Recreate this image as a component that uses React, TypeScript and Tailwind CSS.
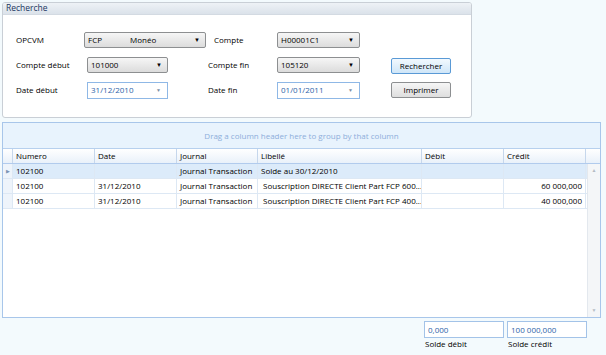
import React from "react";

const font = { fontFamily: '"Open Sans", "Noto Sans", sans-serif' };

function Combo({ children, className = "" }: { children: React.ReactNode; className?: string }) {
  return (
    <div
      className={
        "h-[16px] flex items-center justify-between rounded-[2px] border border-[#8d8f91] bg-gradient-to-b from-[#f6f6f6] to-[#dcdcdc] pl-[3px] pr-[5px] text-[8px] text-black " +
        className
      }
    >
      {children}
      <span className="text-[6px] leading-none">▼</span>
    </div>
  );
}

function DateBox({ value, className = "" }: { value: string; className?: string }) {
  return (
    <div
      className={
        "h-[17px] flex items-center justify-between border border-[#8fb8e6] bg-white pl-[3px] pr-[6px] text-[8px] text-[#2d5fa8] " +
        className
      }
    >
      <span>{value}</span>
      <span className="text-[5px] leading-none text-[#7b8ea5]">▼</span>
    </div>
  );
}

function Btn({ label, focused = false }: { label: string; focused?: boolean }) {
  return (
    <div
      className={
        "h-[16px] w-[60px] flex items-center justify-center rounded-[2px] text-[8px] text-black " +
        (focused
          ? "border border-[#5a9ad6] bg-gradient-to-b from-[#f2f9fe] to-[#cfe6f8]"
          : "border border-[#8d8f91] bg-gradient-to-b from-[#f6f6f6] to-[#dedede]")
      }
    >
      {label}
    </div>
  );
}

const cols = [
  { w: 82, label: "Numero" },
  { w: 82, label: "Date" },
  { w: 81, label: "Journal" },
  { w: 164, label: "Libellé" },
  { w: 82, label: "Débit" },
  { w: 82, label: "Crédit" },
];

const rows = [
  ["102100", "", "Journal Transaction", "Solde au 30/12/2010", "", ""],
  ["102100", "31/12/2010", "Journal Transaction", " Souscription DIRECTE Client Part FCP 600...", "", "60 000,000"],
  ["102100", "31/12/2010", "Journal Transaction", " Souscription DIRECTE Client Part FCP 400...", "", "40 000,000"],
];

export default function App() {
  return (
    <div
      className="w-[606px] h-[355px] overflow-hidden bg-[#f3fafd] flex flex-col pl-[2px] pt-[2px]"
      style={font}
    >
      {/* Recherche panel */}
      <div className="w-[470px] h-[116px] flex flex-col border border-[#c9cfd6] rounded-[3px] bg-white overflow-hidden">
        <div className="h-[12px] flex items-center bg-gradient-to-b from-[#eef2f6] to-[#dbe2ea] pl-[3px] text-[8.5px] text-[#1a3560] border-b border-[#d3dae2]">
          Recherche
        </div>
        <div className="flex flex-col gap-[9px] pt-[17px] pl-[13px] text-[8px] text-black">
          <div className="flex items-center h-[16px]">
            <div className="w-[68px]">OPCVM</div>
            <Combo className="w-[122px]">
              <span className="flex">
                <span className="w-[42px]">FCP</span>
                <span>Monéo</span>
              </span>
            </Combo>
            <div className="w-[71px] pl-[8px]">Compte</div>
            <Combo className="w-[83px]">
              <span>H00001C1</span>
            </Combo>
          </div>
          <div className="flex items-center h-[16px]">
            <div className="w-[71px]">Compte début</div>
            <Combo className="w-[81px]">
              <span>101000</span>
            </Combo>
            <div className="w-[69px] pl-[40px] box-content">Compte fin</div>
            <Combo className="w-[83px]">
              <span>105120</span>
            </Combo>
            <div className="ml-[31px] mt-[1px]">
              <Btn label="Rechercher" focused />
            </div>
          </div>
          <div className="flex items-center h-[16px]">
            <div className="w-[71px]">Date début</div>
            <DateBox value="31/12/2010" className="w-[81px]" />
            <div className="w-[69px] pl-[40px] box-content">Date fin</div>
            <DateBox value="01/01/2011" className="w-[83px]" />
            <div className="ml-[31px]">
              <Btn label="Imprimer" />
            </div>
          </div>
        </div>
      </div>

      {/* Grid */}
      <div className="mt-[4px] w-[599px] h-[196px] flex flex-col border border-[#a8c6ea] bg-white">
        <div className="h-[26px] flex items-center justify-center bg-[#e8f3fd] border-b border-[#b7d0ee] text-[8px] text-[#8daedb]">
          Drag a column header here to group by that column
        </div>
        <div className="h-[15px] flex bg-gradient-to-b from-[#ffffff] to-[#e9f1fa] border-b border-[#b1cbed] text-[8px] text-black">
          <div className="w-[10px] border-r border-[#c6d7ec]" />
          {cols.map((c) => (
            <div
              key={c.label}
              style={{ width: c.w }}
              className="flex items-center pl-[3px] border-r border-[#c6d7ec]"
            >
              {c.label}
            </div>
          ))}
        </div>
        <div className="flex flex-1">
          <div className="flex flex-col w-[584px]">
            {rows.map((r, i) => (
              <div
                key={i}
                className={
                  "h-[15px] flex border-b border-[#dde8f4] text-[8px] text-black " +
                  (i === 0 ? "bg-[#dcebfa]" : "bg-white")
                }
              >
                <div className="w-[10px] flex items-center justify-center border-r border-[#dde8f4] bg-[#eef4fb]">
                  {i === 0 && <span className="text-[5px] text-[#7b93b3] leading-none">▶</span>}
                </div>
                {r.map((v, j) => (
                  <div
                    key={j}
                    style={{ width: cols[j].w }}
                    className={
                      "flex items-center px-[3px] whitespace-pre overflow-hidden border-r border-[#dde8f4] " +
                      (j === 5 ? "justify-end" : "")
                    }
                  >
                    {v}
                  </div>
                ))}
              </div>
            ))}
          </div>
          <div className="ml-auto w-[13px] flex flex-col justify-between items-center bg-[#f4f6f8] border-l border-[#e3e8ee] py-[4px]">
            <span className="text-[5px] text-[#b5bcc4] leading-none">▲</span>
            <span className="text-[5px] text-[#b5bcc4] leading-none">▼</span>
          </div>
        </div>
      </div>

      {/* Soldes */}
      <div className="flex ml-[422px] mt-[3px] gap-[3px] text-[8px]">
        <div className="flex flex-col w-[80px]">
          <div className="h-[17px] flex items-center border border-[#a3c3e8] bg-white pl-[3px] text-[#2d5fa8]">
            0,000
          </div>
          <div className="pl-[1px] leading-[11px] text-black">Solde débit</div>
        </div>
        <div className="flex flex-col w-[80px]">
          <div className="h-[17px] flex items-center border border-[#a3c3e8] bg-white pl-[3px] text-[#2d5fa8]">
            100 000,000
          </div>
          <div className="pl-[1px] leading-[11px] text-black">Solde crédit</div>
        </div>
      </div>
    </div>
  );
}
